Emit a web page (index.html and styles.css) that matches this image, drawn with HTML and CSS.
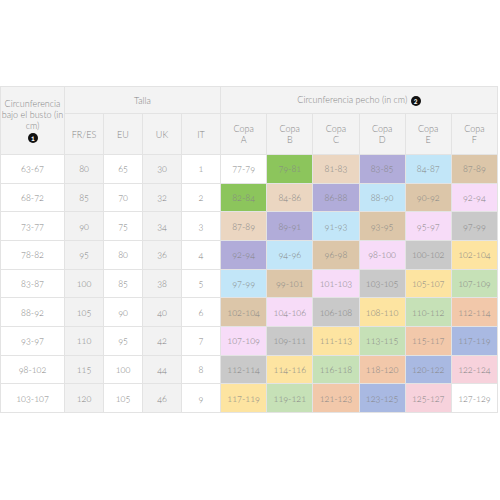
FILE: index.html
```html
<!DOCTYPE html>
<html lang="es">
<head>
<meta charset="utf-8">
<link rel="stylesheet" href="styles.css">
</head>
<body>
<table class="sizes">
  <colgroup>
    <col class="c-first">
    <col class="c-talla"><col class="c-talla"><col class="c-talla"><col class="c-talla">
    <col class="c-copa"><col class="c-copa"><col class="c-copa"><col class="c-copa"><col class="c-copa"><col class="c-copa">
  </colgroup>
  <thead>
    <tr class="h1">
      <th rowspan="2" class="first-h">Circunferencia bajo el busto (in cm)<br><span class="badge">1</span></th>
      <th colspan="4">Talla</th>
      <th colspan="6">Circunferencia pecho (in cm) <span class="badge">2</span></th>
    </tr>
    <tr class="h2">
      <th>FR/ES</th><th>EU</th><th>UK</th><th>IT</th>
      <th>Copa<br>A</th><th>Copa<br>B</th><th>Copa<br>C</th><th>Copa<br>D</th><th>Copa<br>E</th><th>Copa<br>F</th>
    </tr>
  </thead>
  <tbody>
    <tr><td class="w">63-67</td><td class="g">80</td><td class="w">65</td><td class="g">30</td><td class="w">1</td>
      <td class="k0">77-79</td><td class="k1">79-81</td><td class="k2">81-83</td><td class="k3">83-85</td><td class="k4">84-87</td><td class="k5">87-89</td></tr>
    <tr><td class="w">68-72</td><td class="g">85</td><td class="w">70</td><td class="g">32</td><td class="w">2</td>
      <td class="k1">82-84</td><td class="k2">84-86</td><td class="k3">86-88</td><td class="k4">88-90</td><td class="k5">90-92</td><td class="k6">92-94</td></tr>
    <tr><td class="w">73-77</td><td class="g">90</td><td class="w">75</td><td class="g">34</td><td class="w">3</td>
      <td class="k2">87-89</td><td class="k3">89-91</td><td class="k4">91-93</td><td class="k5">93-95</td><td class="k6">95-97</td><td class="k7">97-99</td></tr>
    <tr><td class="w">78-82</td><td class="g">95</td><td class="w">80</td><td class="g">36</td><td class="w">4</td>
      <td class="k3">92-94</td><td class="k4">94-96</td><td class="k5">96-98</td><td class="k6">98-100</td><td class="k7">100-102</td><td class="k8">102-104</td></tr>
    <tr><td class="w">83-87</td><td class="g">100</td><td class="w">85</td><td class="g">38</td><td class="w">5</td>
      <td class="k4">97-99</td><td class="k5">99-101</td><td class="k6">101-103</td><td class="k7">103-105</td><td class="k8">105-107</td><td class="k9">107-109</td></tr>
    <tr><td class="w">88-92</td><td class="g">105</td><td class="w">90</td><td class="g">40</td><td class="w">6</td>
      <td class="k5">102-104</td><td class="k6">104-106</td><td class="k7">106-108</td><td class="k8">108-110</td><td class="k9">110-112</td><td class="k10">112-114</td></tr>
    <tr><td class="w">93-97</td><td class="g">110</td><td class="w">95</td><td class="g">42</td><td class="w">7</td>
      <td class="k6">107-109</td><td class="k7">109-111</td><td class="k8">111-113</td><td class="k9">113-115</td><td class="k10">115-117</td><td class="k11">117-119</td></tr>
    <tr><td class="w">98-102</td><td class="g">115</td><td class="w">100</td><td class="g">44</td><td class="w">8</td>
      <td class="k7">112-114</td><td class="k8">114-116</td><td class="k9">116-118</td><td class="k10">118-120</td><td class="k11">120-122</td><td class="k12">122-124</td></tr>
    <tr><td class="w">103-107</td><td class="g">120</td><td class="w">105</td><td class="g">46</td><td class="w">9</td>
      <td class="k8">117-119</td><td class="k9">119-121</td><td class="k10">121-123</td><td class="k11">123-125</td><td class="k12">125-127</td><td class="k0">127-129</td></tr>
  </tbody>
</table>
</body>
</html>
```
FILE: styles.css
```css
html, body {
  margin: 0;
  padding: 0;
  background: #ffffff;
}
body {
  padding-top: 86px;
  font-family: "Lato", "Open Sans", sans-serif;
  font-weight: 300;
  color: #868686;
  font-size: 9px;
  font-variant-numeric: oldstyle-nums;
}
.sizes {
  width: 497px;
  border-collapse: collapse;
  table-layout: fixed;
}
.c-first { width: 64px; }
.c-talla { width: 39px; }
.c-copa { width: 46.17px; }
.sizes th, .sizes td {
  border: 1px solid #e3e3e3;
  text-align: center;
  vertical-align: middle;
  padding: 0;
  font-weight: 300;
}
.sizes th {
  background: #f3f3f3;
  line-height: 11px;
}
.h1 { height: 27px; }
.h2 { height: 41px; }
.first-h { line-height: 11.5px; }
.badge {
  display: inline-block;
  width: 10px;
  height: 10px;
  border-radius: 50%;
  background: #111;
  color: #fff;
  font-size: 7px;
  font-weight: 700;
  line-height: 10px;
  text-align: center;
  vertical-align: middle;
  margin: 2px 0 0 1px;
}
tbody tr { height: 28.67px; }
.w { background: #ffffff; }
.g { background: #f2f2f2; }
.k0 { background: #ffffff; }
.k1 { background: #8cc55c; }
.k2 { background: #ebd6c1; }
.k3 { background: #b1acd9; }
.k4 { background: #c2e6f8; }
.k5 { background: #dcc6a9; }
.k6 { background: #f7dcf8; }
.k7 { background: #c9c9c9; }
.k8 { background: #fde4a1; }
.k9 { background: #c6e1b7; }
.k10 { background: #f2c8aa; }
.k11 { background: #a9b9e2; }
.k12 { background: #f7d2dc; }
```
